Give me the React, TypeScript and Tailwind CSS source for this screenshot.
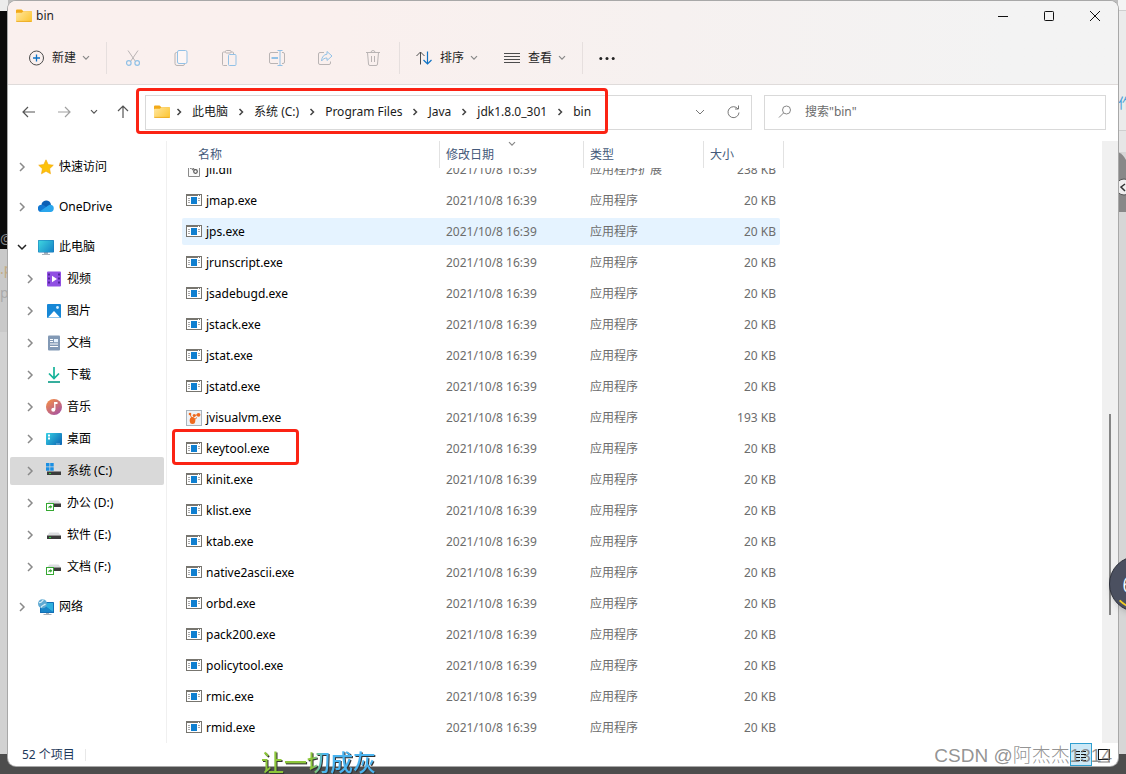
import type { ReactNode } from 'react';

type SvgProps = { children: ReactNode; size?: string; box?: string };

function Svg({ children, size = 'size-4', box = '0 0 16 16' }: SvgProps) {
  return (
    <svg viewBox={box} className={`${size} shrink-0`} fill="none" aria-hidden="true">
      {children}
    </svg>
  );
}

function ChevronRight({ dark = false }: { dark?: boolean }) {
  return (
    <svg viewBox="0 0 8 10" className="h-2.5 w-2 shrink-0" fill="none" aria-hidden="true">
      <path d={dark ? 'M2.500 2l3 3-3 3' : 'M2 1l4 4-4 4'} stroke={dark ? '#444' : '#8a8a8a'} strokeWidth="1.5" />
    </svg>
  );
}

function ChevronDown({ color = '#888' }: { color?: string }) {
  return (
    <svg viewBox="0 0 8 6" className="h-1.5 w-2 shrink-0" fill="none" aria-hidden="true">
      <path d="M1 1.2l3 3 3-3" stroke={color} strokeWidth="1.2" />
    </svg>
  );
}

function FolderIcon() {
  return (
    <Svg>
      <path d="M0 2.500a1 1 0 0 1 1-1h4.500l2 1.800H15a1 1 0 0 1 1 1V7H0z" fill="#f2a918" />
      <path d="M0 5.700a1 1 0 0 1 1-1h4.800l1.700-1.400H15a1 1 0 0 1 1 1V13a1 1 0 0 1-1 1H1a1 1 0 0 1-1-1z" fill="url(#folder)" />
      <path d="M.3 13.400h15.400" stroke="#e9a51d" strokeWidth=".8" />
      <defs>
        <linearGradient id="folder" x1="2" y1="4" x2="13" y2="14" gradientUnits="userSpaceOnUse">
          <stop stopColor="#ffe394" />
          <stop offset="1" stopColor="#fcc83c" />
        </linearGradient>
      </defs>
    </Svg>
  );
}

function ExeIcon() {
  return (
    <Svg box="0 1 16 16">
      <rect x=".5" y="2.500" width="15" height="11" fill="#fff" stroke="#77756f" />
      <path d="M0 3h16" stroke="#77756f" strokeWidth="2" />
      <path d="M12 3.500h1M14 3.500h1" stroke="#fff" />
      <rect x="5" y="5" width="6" height="7" fill="#0f7fd0" />
      <path d="M2 6.500h2M2 8.500h2M2 10.500h2M12 6.500h2M12 8.500h2" stroke="#a9a9a9" />
    </Svg>
  );
}

function DllIcon() {
  return (
    <Svg>
      <path d="M2.500.5h11v14h-11z" fill="#fafafa" stroke="#8a8a8a" />
      <path d="M4.500 5.500l4 2.500" stroke="#777" strokeWidth="2.500" strokeDasharray="1.500 .7" />
      <circle cx="9.500" cy="9.500" r="1.800" stroke="#555" strokeWidth="1.200" />
    </Svg>
  );
}

function VisualVmIcon() {
  return (
    <Svg>
      <rect x=".5" y=".5" width="15" height="15" fill="#eef2f6" stroke="#aab4bd" />
      <ellipse cx="6.500" cy="10.500" rx="2.800" ry="3.500" fill="#ee6a1f" />
      <circle cx="4" cy="4" r="1.300" fill="#ee6a1f" />
      <circle cx="8.200" cy="5.500" r="1.500" fill="#ee6a1f" />
      <circle cx="12.500" cy="4.800" r="1.900" fill="#ee6a1f" />
      <path d="M4 4l2.500 6M8.500 5.500l4-1M7.500 10.500l3.500-3" stroke="#ee6a1f" />
    </Svg>
  );
}

function Drive({ kind }: { kind: 'system' | 'shared' | 'plain' }) {
  return (
    <Svg>
      <path d="M3.500 5.500h9L15 8.500H1z" fill="#dcdde0" />
      <rect x="1" y="8.500" width="14" height="3.500" fill="#3b3b3b" />
      {kind !== 'shared' && <path d="M3 10.500h2" stroke="#2fd43c" />}
      {kind === 'system' && (
        <>
          <path d="M0 0h8v8H0z" fill="#d9d9d9" />
          <path d="M0 0h3.500v3.500H0zM4.200 0h3.500v3.500H4.200zM0 4.200h3.500v3.500H0zM4.200 4.200h3.500v3.500H4.200z" fill="#1a8fe3" />
        </>
      )}
      {kind === 'shared' && (
        <>
          <rect x=".5" y="8.500" width="7" height="7" fill="#fff" stroke="#35a832" />
          <path d="M2.300 13.500c0-2 .7-2.500 2-2.500V9.800l2 2-2 2v-1.300c-1 0-1.500.2-2 1z" fill="#35a832" />
        </>
      )}
    </Svg>
  );
}

function Monitor() {
  return (
    <Svg>
      <path d="M6 13h4v2H6zM4 15h8v1H4z" fill="#a9b2ba" />
      <rect y="1" width="16" height="12.500" rx=".8" fill="#1976b8" />
      <rect x=".5" y="1.500" width="15" height="11.500" rx=".4" fill="url(#screen)" />
      <defs>
        <linearGradient id="screen" x1="1" y1="1" x2="15" y2="13" gradientUnits="userSpaceOnUse">
          <stop stopColor="#3fd6e0" />
          <stop offset="1" stopColor="#1583c6" />
        </linearGradient>
      </defs>
    </Svg>
  );
}

const star = (
  <Svg>
    <path d="M8 .8l2.200 4.700 5.100.7-3.700 3.500.9 5.100L8 12.300l-4.500 2.500.9-5.100L.7 6.200l5.100-.7z" fill="#fdc20a" stroke="#f2a60c" strokeWidth=".6" />
  </Svg>
);

const cloud = (
  <Svg>
    <path d="M3.500 6.500A4.700 4.700 0 0 1 13 5.800L8 10z" fill="#0b5fb5" />
    <path d="M3.500 13A3.600 3.600 0 0 1 3.500 5.800c1.800 0 3 .8 4 1.800L14 12z" fill="#1278d2" />
    <path d="M1.800 12.500L9.500 7c1-.9 2-1.500 3.300-1.300A3.700 3.700 0 0 1 12.500 13h-9z" fill="#2aa6ec" />
  </Svg>
);

const video = (
  <Svg>
    <rect x="1" y=".5" width="14" height="15" rx="1" fill="#9150e3" />
    <path d="M3 2.500v12M13 2.500v12" stroke="#4b2192" strokeWidth="1.800" strokeDasharray="2 2" />
    <path d="M6 4.800v6.400L11 8z" fill="#fff" />
  </Svg>
);

const picture = (
  <Svg>
    <rect x="1" y="1" width="14" height="14" rx="1" fill="#1687d6" />
    <path d="M2 14.500l6-6.500 6 6.500z" fill="#fff" />
    <circle cx="11.500" cy="4.500" r="1.400" fill="#d9f0ff" />
  </Svg>
);

const documents = (
  <Svg>
    <rect x="2" y=".5" width="12" height="15" rx="1" fill="#8299b5" />
    <path d="M4 4.500h3M4 6.500h3M4 9h8M4 11.500h8" stroke="#fff" strokeWidth="1.200" />
    <rect x="8" y="4" width="4" height="3.200" fill="#e6f3ff" />
  </Svg>
);

const download = (
  <Svg>
    <path d="M8 0v11M3 6.500l5 5 5-5" stroke="#16b39a" strokeWidth="1.700" />
    <path d="M2 15h12" stroke="#12a08c" strokeWidth="1.700" />
  </Svg>
);

const music = (
  <Svg>
    <circle cx="8" cy="8" r="8" fill="url(#music)" />
    <path d="M8.800 3v7.500" stroke="#fff" strokeWidth="1.300" />
    <path d="M8.300 3h3.200v2H8.300z" fill="#fff" />
    <circle cx="7.300" cy="10.800" r="2" fill="#fff" />
    <defs>
      <linearGradient id="music" x1="3" y1="1" x2="13" y2="15" gradientUnits="userSpaceOnUse">
        <stop stopColor="#ef8a4d" />
        <stop offset="1" stopColor="#a9559f" />
      </linearGradient>
    </defs>
  </Svg>
);

const desktop = (
  <Svg>
    <rect y="2" width="16" height="12" rx=".8" fill="url(#desk)" />
    <path d="M2 4.500h2M2 7.500h2" stroke="#fff" strokeWidth="1.800" />
    <path d="M10.500 13h1M12.500 13h1" stroke="#fff" />
    <defs>
      <linearGradient id="desk" x1="1" y1="2" x2="15" y2="14" gradientUnits="userSpaceOnUse">
        <stop stopColor="#35cde3" />
        <stop offset="1" stopColor="#0c66b4" />
      </linearGradient>
    </defs>
  </Svg>
);

const network = (
  <Svg>
    <path d="M8 13h3v2H8zM5.500 15h8v1h-8z" fill="#a9b2ba" />
    <rect x="2" y="3" width="14" height="11" rx=".6" fill="#136fb5" />
    <path d="M3 4h12v9z" fill="#2fb0de" />
    <path d="M3 4l12 9H3z" fill="#1a86c9" />
    <circle cx="4.500" cy="4.800" r="4.500" fill="#5fa9d2" />
    <path d="M1 3.500c2 .8 2.500-.6 4.500-2.800M3 8.500c.5-2 3-2 4.500-3.500" stroke="#d5edf7" strokeWidth="1.200" />
  </Svg>
);

type Place = { label: string; icon: ReactNode; nested?: boolean; open?: boolean; active?: boolean };

const groups: Place[][] = [
  [{ label: '快速访问', icon: star }],
  [{ label: 'OneDrive', icon: cloud }],
  [
    { label: '此电脑', icon: <Monitor />, open: true },
    { label: '视频', icon: video, nested: true },
    { label: '图片', icon: picture, nested: true },
    { label: '文档', icon: documents, nested: true },
    { label: '下载', icon: download, nested: true },
    { label: '音乐', icon: music, nested: true },
    { label: '桌面', icon: desktop, nested: true },
    { label: '系统 (C:)', icon: <Drive kind="system" />, nested: true, active: true },
    { label: '办公 (D:)', icon: <Drive kind="shared" />, nested: true },
    { label: '软件 (E:)', icon: <Drive kind="plain" />, nested: true },
    { label: '文档 (F:)', icon: <Drive kind="shared" />, nested: true },
  ],
  [{ label: '网络', icon: network }],
];

function PlaceRow({ place }: { place: Place }) {
  return (
    <li className="flex h-8 items-center px-0.5">
      <button
        type="button"
        className={`flex h-7 w-full items-center rounded-xs ${place.nested ? 'pl-3.5' : 'pl-1.5'} ${place.active ? 'bg-[#d9d9d9]' : ''}`}
      >
        <span className="flex w-3 shrink-0 justify-center">
          {place.open ? (
            <svg viewBox="0 0 10 8" className="h-2 w-2.5" fill="none" aria-hidden="true">
              <path d="M1 2l4 4 4-4" stroke="#222" strokeWidth="1.500" />
            </svg>
          ) : (
            <ChevronRight />
          )}
        </span>
        <span className="ml-2.5">{place.icon}</span>
        <span className="ml-[5px] text-black">{place.label}</span>
      </button>
    </li>
  );
}

type FileRow = { name: string; type: string; size: string; icon: ReactNode; state?: 'hover' | 'marked' | 'cut' };

const exe = (name: string, state?: FileRow['state']): FileRow => ({
  name,
  type: '应用程序',
  size: '20 KB',
  icon: <ExeIcon />,
  state,
});

const files: FileRow[] = [
  { name: 'jli.dll', type: '应用程序扩展', size: '238 KB', icon: <DllIcon />, state: 'cut' },
  exe('jmap.exe'),
  exe('jps.exe', 'hover'),
  exe('jrunscript.exe'),
  exe('jsadebugd.exe'),
  exe('jstack.exe'),
  exe('jstat.exe'),
  exe('jstatd.exe'),
  { name: 'jvisualvm.exe', type: '应用程序', size: '193 KB', icon: <VisualVmIcon /> },
  exe('keytool.exe', 'marked'),
  exe('kinit.exe'),
  exe('klist.exe'),
  exe('ktab.exe'),
  exe('native2ascii.exe'),
  exe('orbd.exe'),
  exe('pack200.exe'),
  exe('policytool.exe'),
  exe('rmic.exe'),
  exe('rmid.exe'),
];

type CellProps = { state?: FileRow['state']; last?: boolean; className: string; children: ReactNode };

function Cell({ state, last = false, className, children }: CellProps) {
  return (
    <td className={last ? 'p-0 pr-1' : 'p-0'}>
      <div className={state === 'cut' ? 'flex h-[17px] items-end overflow-hidden' : 'flex h-[31px] items-center'}>
        <div
          className={`flex w-full shrink-0 items-center ${state === 'cut' ? 'h-[31px]' : 'h-[27px]'} ${state === 'hover' ? 'bg-[#e5f3ff]' : ''} ${className}`}
        >
          {children}
        </div>
      </div>
    </td>
  );
}

function FileTable() {
  const head = 'relative h-[27px] border-r border-[#e2e2e2] p-0 text-left font-normal text-[#44597a]';
  return (
    <table className="w-[602px] table-fixed border-separate border-spacing-0">
      <colgroup>
        <col className="w-[258px]" />
        <col className="w-36" />
        <col className="w-[120px]" />
        <col className="w-20" />
      </colgroup>
      <thead>
        <tr>
          <th className={`${head} pl-4`}>名称</th>
          <th className={`${head} pl-1.5`}>
            修改日期
            <span className="absolute inset-x-0 top-0 flex justify-center">
              <ChevronDown />
            </span>
          </th>
          <th className={`${head} pl-1.5`}>类型</th>
          <th className={`${head} pl-1.5`}>大小</th>
        </tr>
      </thead>
      <tbody>
        {files.map((f) => (
          <tr key={f.name} className="text-[#6d6d6d]">
            <Cell state={f.state} className="relative gap-1 rounded-l-xs pl-1 text-black">
              {f.icon}
              {f.name}
              {f.state === 'marked' && (
                <span className="pointer-events-none absolute -top-1.5 -left-2.5 h-9 w-[127px] rounded-sm border-3 border-[#fb2314]" />
              )}
            </Cell>
            <Cell state={f.state} className="pl-1.5">
              2021/10/8 16:39
            </Cell>
            <Cell state={f.state} className="pl-1.5">
              {f.type}
            </Cell>
            <Cell state={f.state} last className="justify-end rounded-r-xs pr-1">
              {f.size}
            </Cell>
          </tr>
        ))}
      </tbody>
    </table>
  );
}

function Tool({ label, children }: { label: string; children: ReactNode }) {
  return (
    <button type="button" aria-label={label} className="flex w-12 items-center justify-center">
      {children}
    </button>
  );
}

function Toolbar() {
  const g = '#b9b4b4';
  const b = '#92c1e6';
  return (
    <div className="flex h-[55px] items-center border-b border-[#dfdbda] pt-0.5 text-[#1f1f1f]">
      <button type="button" className="flex w-[98px] items-center pl-5">
        <Svg>
          <circle cx="8.500" cy="8" r="7" stroke="#4c4c4c" />
          <path d="M8.500 4.500v7M5 8h7" stroke="#0f72c4" strokeWidth="1.300" />
        </Svg>
        <span className="mr-1.5 ml-2">新建</span>
        <ChevronDown />
      </button>
      <span className="h-8 w-px bg-[#e6dfde]" />
      <div className="flex w-[292px] pl-0.5">
        <Tool label="剪切">
          <Svg>
            <path d="M3 0.500l7.500 11M13 .5L5.500 11.500" stroke={g} />
            <circle cx="3.800" cy="13" r="2.300" stroke={b} strokeWidth="1.200" />
            <circle cx="12.200" cy="13" r="2.300" stroke={b} strokeWidth="1.200" />
          </Svg>
        </Tool>
        <Tool label="复制">
          <Svg>
            <path d="M4 2.500H3.500a1.500 1.500 0 0 0-1.500 1.500v9.500a2 2 0 0 0 2 2h6a1.500 1.500 0 0 0 1.500-1.500" stroke={g} />
            <rect x="4.500" y=".5" width="9.500" height="13" rx="1.500" stroke={b} fill="#fdf6f5" />
          </Svg>
        </Tool>
        <Tool label="粘贴">
          <Svg>
            <path d="M6 15.500H2.500a1 1 0 0 1-1-1V3a1 1 0 0 1 1-1H4M10 2h1.500a1 1 0 0 1 1 1v1" stroke={g} />
            <rect x="4.500" y=".5" width="5.500" height="2.500" rx="1" stroke={g} />
            <rect x="7.500" y="4.500" width="7.500" height="11" rx="1" stroke={b} />
          </Svg>
        </Tool>
        <Tool label="重命名">
          <Svg>
            <path d="M9 2.500H2A1.500 1.500 0 0 0 .5 4v8A1.500 1.500 0 0 0 2 13.500h7M13 2.500h1A1.500 1.500 0 0 1 15.500 4v8a1.500 1.500 0 0 1-1.500 1.500h-1" stroke={g} />
            <path d="M11 .5v15M8.500.5h5M8.500 15.500h5" stroke={b} />
            <path d="M2.500 8H9" stroke={b} strokeWidth="2" />
          </Svg>
        </Tool>
        <Tool label="共享">
          <Svg>
            <path d="M7 2.500H3A1.500 1.500 0 0 0 1.500 4v9A1.500 1.500 0 0 0 3 14.500h9a1.500 1.500 0 0 0 1.500-1.500v-1.500" stroke={g} />
            <path d="M10 1.500l5 4.500-5 4.500V8C7.500 8 6 9 4.500 11 4.700 7 7 4.500 10 4.200z" stroke={b} strokeLinejoin="round" />
          </Svg>
        </Tool>
        <Tool label="删除">
          <Svg>
            <path d="M1 2.500h14M6 2.500a2 2 0 0 1 4 0M2.500 2.500l1 11.500a1.500 1.500 0 0 0 1.500 1.500h6a1.500 1.500 0 0 0 1.500-1.500l1-11.500M6.500 6v6M9.500 6v6" stroke={g} />
          </Svg>
        </Tool>
      </div>
      <span className="h-8 w-px bg-[#e6dfde]" />
      <button type="button" className="ml-4 flex w-[88px] items-center">
        <Svg>
          <path d="M4.500 14.500V2M.5 6l4-4 4 4" stroke="#4c4c4c" />
          <path d="M11.500 1.500V14M7.500 10l4 4 4-4" stroke="#0f72c4" strokeWidth="1.200" />
        </Svg>
        <span className="mr-1.5 ml-2">排序</span>
        <ChevronDown />
      </button>
      <button type="button" className="flex w-[78px] items-center">
        <Svg>
          <path d="M0 3.500h16M0 6.500h16M0 9.500h16M0 12.500h16" stroke="#4c4c4c" />
        </Svg>
        <span className="mr-1.5 ml-2">查看</span>
        <ChevronDown />
      </button>
      <span className="h-8 w-px bg-[#e6dfde]" />
      <button type="button" aria-label="更多" className="ml-4">
        <Svg>
          <circle cx="1.800" cy="8.500" r="1.500" fill="#222" />
          <circle cx="8" cy="8.500" r="1.500" fill="#222" />
          <circle cx="14.200" cy="8.500" r="1.500" fill="#222" />
        </Svg>
      </button>
    </div>
  );
}

const crumbs = ['此电脑', '系统 (C:)', 'Program Files', 'Java', 'jdk1.8.0_301', 'bin'];

function AddressBar() {
  return (
    <div className="flex h-14 items-center pr-3 pb-0.5 pl-[13px]">
      <div className="flex w-[124px] shrink-0 items-center">
        <button type="button" aria-label="后退">
          <Svg>
            <path d="M14 8H2M7 3L2 8l5 5" stroke="#555" strokeWidth="1.200" />
          </Svg>
        </button>
        <button type="button" aria-label="前进" className="ml-[19px]">
          <Svg>
            <path d="M2 8h12M9 3l5 5-5 5" stroke="#a0a0a0" strokeWidth="1.200" />
          </Svg>
        </button>
        <button type="button" aria-label="最近" className="ml-[18px]">
          <ChevronDown color="#555" />
        </button>
        <button type="button" aria-label="向上" className="ml-[17px]">
          <Svg>
            <path d="M8 14V2M3 7l5-5 5 5" stroke="#555" strokeWidth="1.200" />
          </Svg>
        </button>
      </div>
      <div className="relative flex h-[35px] flex-1 items-center border border-[#d9d9d9] pr-2.5 pl-2">
        <FolderIcon />
        <ol className="-ml-1 flex items-center text-[#1b1b1b]">
          {crumbs.map((c) => (
            <li key={c} className="flex items-center">
              <span className="mx-[9px] flex">
                <ChevronRight dark />
              </span>
              <a href="#">{c}</a>
            </li>
          ))}
        </ol>
        <span className="pointer-events-none absolute -top-2 -left-2.5 h-[46px] w-[472px] rounded-sm border-3 border-[#fb2314]" />
        <button type="button" aria-label="历史记录" className="ml-auto">
          <svg viewBox="0 0 10 8" className="h-2 w-2.5" fill="none" aria-hidden="true">
            <path d="M1 2l4 4 4-4" stroke="#777" />
          </svg>
        </button>
        <button type="button" aria-label="刷新" className="ml-5">
          <Svg>
            <path d="M13 5A5.500 5.500 0 1 0 14 8.500M13.500 1.500V5H10" stroke="#777" />
          </Svg>
        </button>
      </div>
      <label className="ml-3 flex h-[35px] w-[342px] items-center border border-[#d9d9d9] pl-3">
        <Svg>
          <circle cx="9.500" cy="6" r="4" stroke="#888" />
          <path d="M6.500 9L2 13.500" stroke="#888" />
        </Svg>
        <input
          type="text"
          aria-label="搜索"
          placeholder={'搜索"bin"'}
          className="ml-3 min-w-0 flex-1 bg-transparent outline-none placeholder:text-[#6b6b6b]"
        />
      </label>
    </div>
  );
}

function Backdrop() {
  return (
    <div className="absolute inset-0 flex flex-col bg-[#bdbdbd] text-sm" aria-hidden="true">
      <div className="flex flex-1 justify-between overflow-hidden">
        <div className="flex w-2 flex-col overflow-hidden bg-[#d2d2d2]">
          <div className="h-[11px] bg-[#ececec]" />
          <div className="flex h-[238px] items-end bg-[#0b0b0b] leading-5 text-[#888]">@</div>
          <div className="h-[83px] bg-[#c9c9c9] pt-2 leading-6 text-[#aaa]">
            <p className="text-[#c2ab83]">.p</p>
            <p>p</p>
          </div>
        </div>
        <div className="flex w-2 flex-col overflow-hidden bg-[#d6d6d6]">
          <div className="h-2.5 bg-[#f4f4f4]" />
          <div className="h-[121px] border-y border-[#cfcfcf] bg-[#ebebeb] pt-[82px] leading-5 text-[#4a9fd8]">作</div>
          <div className="h-[21px] bg-[#e6e6e6]" />
          <svg viewBox="0 0 8 60" className="h-15 w-2" fill="none">
            <path d="M0 0q5 2 8 8v52H0z" fill="#888" />
            <circle cx="6" cy="35" r="8" fill="#eee" stroke="#555" />
            <path d="M7 32l-4 3 4 4" stroke="#333" strokeWidth="1.500" />
          </svg>
        </div>
      </div>
      <div className="h-5 bg-[#4d4d4d]" />
    </div>
  );
}

export default function App() {
  return (
    <div className="relative flex min-h-screen flex-col overflow-hidden px-2 pt-px pb-2 font-['Noto_Sans','Noto_Sans_CJK_SC',sans-serif] text-xs leading-4">
      <Backdrop />
      <div className="relative flex flex-1 flex-col overflow-hidden rounded-lg bg-white shadow-[0_0_0_1px_#a8a8a8]">
        <header className="bg-linear-to-r from-[#faf0ee] from-30% via-[#f6f1f0] via-60% to-[#f3f3f3] to-90%">
          <div className="flex h-[29px] items-center pl-2 text-[#1f1f1f]">
            <FolderIcon />
            <h1 className="ml-1">bin</h1>
            <div className="ml-auto flex">
              <button type="button" aria-label="最小化" className="flex w-[46px] justify-center">
                <Svg>
                  <path d="M3 8.500h10" stroke="#111" />
                </Svg>
              </button>
              <button type="button" aria-label="最大化" className="flex w-[46px] justify-center">
                <Svg>
                  <rect x="3.500" y="3.500" width="9" height="9" rx=".8" stroke="#111" />
                </Svg>
              </button>
              <button type="button" aria-label="关闭" className="flex w-[46px] justify-center">
                <Svg>
                  <path d="M3 3l10 10M13 3L3 13" stroke="#111" />
                </Svg>
              </button>
            </div>
          </div>
          <Toolbar />
        </header>
        <AddressBar />
        <div className="flex flex-1">
          <nav className="flex w-[159px] shrink-0 flex-col gap-2 border-r border-[#f0f0f0] pt-2.5">
            {groups.map((g) => (
              <ul key={g[0].label}>
                {g.map((p) => (
                  <PlaceRow key={p.label} place={p} />
                ))}
              </ul>
            ))}
          </nav>
          <main className="flex-1 pl-[15px]">
            <FileTable />
          </main>
          <div className="flex w-4 justify-center bg-[#f0f0f0] pt-[273px]">
            <span className="h-[201px] w-0.5 bg-[#858585]" />
          </div>
        </div>
        <footer className="flex h-[23px] items-center pr-1.5 pl-3.5 text-[#1e395b]">
          <span>52 个项目</span>
          <span className="ml-2.5 h-3 w-px bg-[#e8e8e8]" />
          <button type="button" aria-label="详细信息" className="ml-auto flex h-[23px] w-[22px] items-center justify-center border border-[#2f9fd0] bg-[#cce8f6]">
            <Svg>
              <path d="M3 4.500h4M8 4.500h5M3 7.500h4M8 7.500h5M3 10.500h4M8 10.500h5M3 13.500h4M8 13.500h5" stroke="#111" />
            </Svg>
          </button>
          <button type="button" aria-label="大图标" className="ml-1">
            <Svg>
              <rect x="2.500" y="2.500" width="11" height="10" stroke="#111" />
              <path d="M2 15h12" stroke="#777" />
            </Svg>
          </button>
        </footer>
      </div>
      <div className="pointer-events-none absolute top-[556px] -right-[39px] flex size-14 items-center rounded-full border border-[#2d303a] bg-[#4b5060] pl-3 text-2xl font-light text-white shadow-md">
        6
        <svg viewBox="0 0 56 56" className="absolute inset-0" fill="none" aria-hidden="true">
          <path d="M10 45q8 8 18 8" stroke="#f2cf27" strokeWidth="2" />
        </svg>
      </div>
      <p className="pointer-events-none absolute right-3.5 bottom-1.5 font-['Liberation_Sans','Noto_Sans_CJK_SC',sans-serif] text-[19px] leading-6 font-light text-[#777]/80">
        CSDN @阿杰杰1314
      </p>
      <p className="pointer-events-none absolute -bottom-1 left-[261px] bg-linear-to-r from-[#8cc63a] from-45% to-[#4bb4f0] to-55% bg-clip-text text-[23px] leading-8 font-medium text-transparent drop-shadow-[1px_1px_0_#333]">
        让一切成灰
      </p>
    </div>
  );
}
